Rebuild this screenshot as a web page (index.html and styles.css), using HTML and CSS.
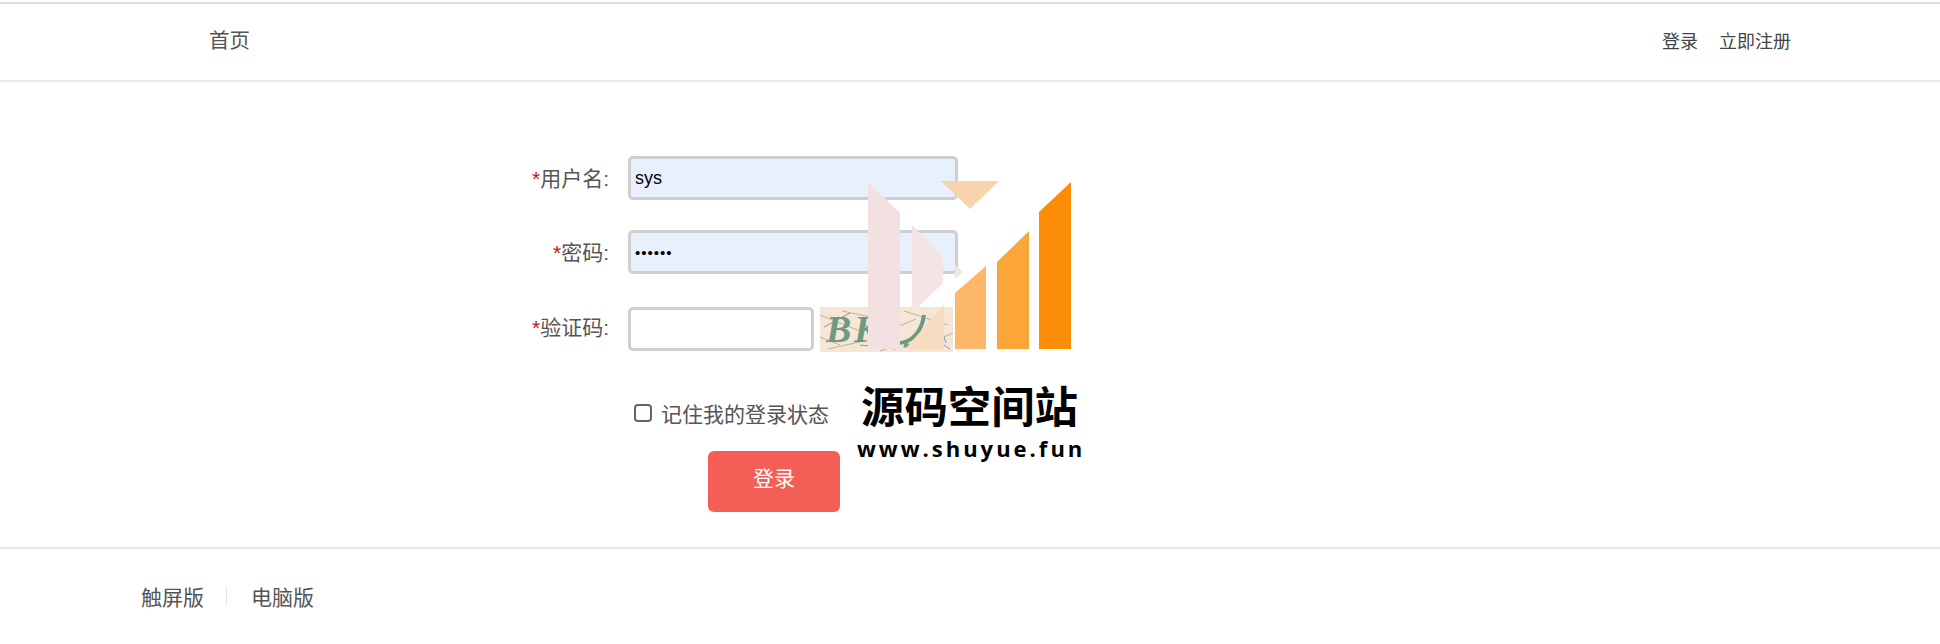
FILE: index.html
```html
<!DOCTYPE html>
<html lang="zh-CN">
<head>
    <meta charset="UTF-8">
    <meta name="viewport" content="width=device-width, initial-scale=1.0">
    <title>登录</title>
    <link rel="stylesheet" href="styles.css">
</head>
<body>
    <div class="header">
        <a class="nav-home" href="#">首页</a>
        <div class="nav-user">
            <a href="#">登录</a>
            <a href="#">立即注册</a>
        </div>
    </div>

    <div class="main">
        <form class="login-form">
            <div class="row row-first">
                <label class="label"><span class="star">*</span>用户名:</label>
                <input class="field filled" type="text" value="sys">
            </div>
            <div class="row row-second">
                <label class="label"><span class="star">*</span>密码:</label>
                <input class="field filled pwd" type="password" value="sys123">
            </div>
            <div class="row row-third">
                <label class="label"><span class="star">*</span>验证码:</label>
                <input class="field code" type="text">
                <svg class="captcha" width="133" height="45" viewBox="0 0 133 45">
                    <rect width="133" height="45" fill="#f6e6d6"/>
                    <path d="M0 8 L40 24 M8 42 L62 30 M22 4 L70 14 M60 44 L100 30 M84 4 L128 18 M100 40 L133 26 M0 30 L20 38 M50 6 L78 2 M72 22 L96 12" stroke="#b9b6a0" stroke-width="1" fill="none"/>
                    <path d="M4 20 L30 6 M40 38 L76 42 M112 30 L130 42 M118 10 L126 36 M44 18 L70 30" stroke="#8f93a8" stroke-width="1" fill="none"/>
                    <text class="captcha-text" x="6" y="35">B</text>
                    <text class="captcha-text" x="34" y="35">K</text>
                    <path d="M78 36 C92 36 102 24 104 8 M84 38 C96 42 112 30 116 12" stroke="#6f9a82" stroke-width="4" fill="none"/>
                </svg>
            </div>
            <div class="remember">
                <input class="check" type="checkbox" id="remember">
                <label for="remember">记住我的登录状态</label>
            </div>
            <button class="submit" type="button">登录</button>
        </form>
    </div>

    <div class="footer">
        <a href="#">触屏版</a>
        <span class="sep"></span>
        <a href="#">电脑版</a>
    </div>

    <!-- watermark sits on top of the form -->
    <div class="watermark">
        <svg class="wm-logo" width="220" height="175" viewBox="860 178 220 175">
            <path d="M868 182 L900 213 L900 349 L868 349 Z" fill="#f3e0e0"/>
            <path d="M912 225 L943 257 L943 283 L912 313 Z" fill="#f3e5e4"/>
            <path d="M944 305 L944 349 L905 349 Z" fill="#f7dcc0"/>
            <path d="M955 265 L963 272 L955 279 Z" fill="#f3e5e4"/>
            <path d="M941 181 L999 181 L970 209 Z" fill="#f8d3ab"/>
            <path d="M955 293 L986 266 L986 349 L955 349 Z" fill="#fdb769"/>
            <path d="M997 262 L1029 231 L1029 349 L997 349 Z" fill="#fca538"/>
            <path d="M1039 212 L1071 182 L1071 349 L1039 349 Z" fill="#fb8c06"/>
        </svg>
        <div class="wm-title">源码空间站</div>
        <div class="wm-url">www.shuyue.fun</div>
    </div>
</body>
</html>
```

FILE: styles.css
```css
* {
    box-sizing: border-box;
}

body {
    margin: 0;
    padding-top: 2px;
    background-color: white;
    color: #555;
    font-family: "Liberation Sans", "Noto Sans CJK SC", sans-serif;
    position: relative;
    height: 644px;
    overflow: hidden;
}

a {
    color: inherit;
    text-decoration: none;
}

.header {
    height: 80px;
    border-top: 2px solid #dedede;
    border-bottom: 2px solid #ebebeb;
    padding: 0 149px 5px 209px;
    display: flex;
    align-items: center;
    justify-content: space-between;
}

.nav-home {
    font-size: 20.5px;
    margin-top: -2px;
}

.nav-user {
    display: flex;
    gap: 21px;
    font-size: 18px;
    color: #444;
}

.main {
    height: 465px;
    padding: 74px 0 0 500px;
}

.row {
    display: flex;
    align-items: center;
    height: 44px;
}

.row-second {
    margin-top: 30px;
}

.row-third {
    margin-top: 33px;
}

.label {
    width: 109px;
    margin-right: 19px;
    padding-bottom: 3px;
    text-align: right;
    font-size: 21px;
}

.row-third .label {
    padding-bottom: 7px;
}

.star {
    color: #c8101a;
}

.field {
    width: 330px;
    height: 44px;
    border: 3px solid #cfcfcf;
    border-radius: 5px;
    padding: 0 4px;
    font-family: inherit;
    font-size: 18px;
    color: black;
    background-color: white;
}

.filled {
    background-color: #e8f0fe;
}

.pwd {
    font-size: 15px;
    letter-spacing: 1px;
}

.code {
    width: 186px;
}

.captcha {
    margin-left: 6px;
}

.captcha-text {
    font-family: "Liberation Serif", serif;
    font-size: 38px;
    font-style: italic;
    font-weight: bold;
    fill: #6f9a82;
}

.remember {
    display: flex;
    align-items: center;
    margin: 49px 0 0 134px;
    height: 26px;
    font-size: 21px;
}

.check {
    appearance: none;
    width: 18px;
    height: 18px;
    margin: 0 9px 0 0;
    border: 2px solid #666;
    border-radius: 4px;
    background-color: white;
}

.submit {
    display: block;
    width: 132px;
    height: 61px;
    margin: 25px 0 0 208px;
    padding: 0 0 9px;
    border: none;
    border-radius: 6px;
    background-color: #f35e57;
    color: white;
    font-family: inherit;
    font-size: 21px;
}

.footer {
    border-top: 2px solid #e6e6e6;
    padding: 32px 0 0 141px;
    display: flex;
    align-items: center;
    font-size: 21px;
}

.sep {
    width: 1px;
    height: 20px;
    margin: 0 24px 0 22px;
    background-color: #e4e4e4;
}

.watermark {
    position: absolute;
    left: 860px;
    top: 178px;
    width: 220px;
}

.wm-logo {
    display: block;
}

.wm-title {
    margin: 30px 0 0 1px;
    font-size: 43.4px;
    line-height: 50px;
    font-weight: bold;
    color: black;
    white-space: nowrap;
}

.wm-url {
    margin: 0 0 0 -3px;
    font-family: "Open Sans", sans-serif;
    font-size: 22px;
    line-height: 30px;
    font-weight: 700;
    letter-spacing: 3px;
    color: black;
    white-space: nowrap;
}
```
